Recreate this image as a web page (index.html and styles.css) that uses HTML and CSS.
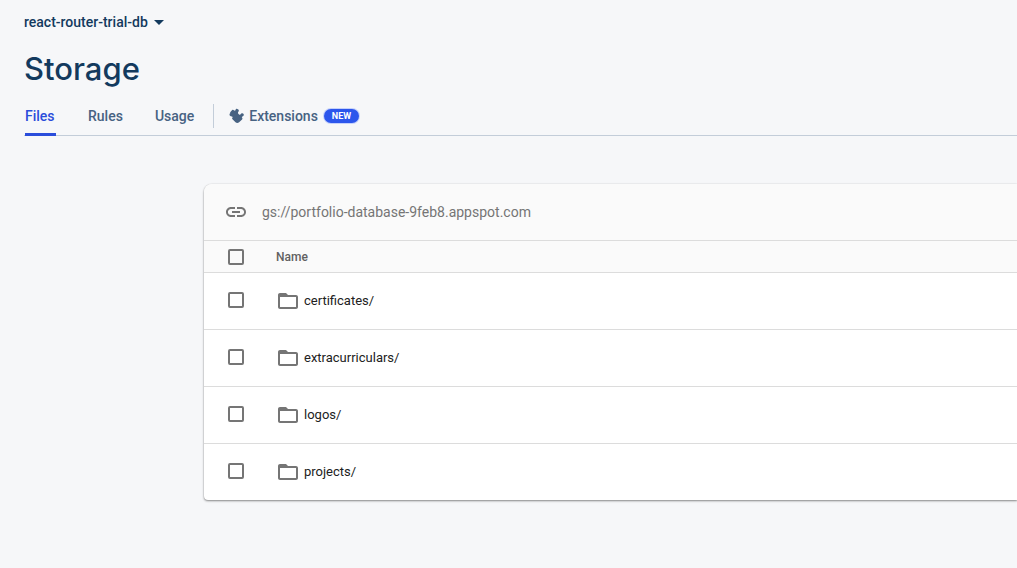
FILE: index.html
```html
<!DOCTYPE html>
<html lang="en">
<head>
<meta charset="utf-8">
<title>Storage</title>
<link rel="stylesheet" href="styles.css">
</head>
<body>
<header class="page-header">
  <button class="project-picker" type="button">react-router-trial-db
    <svg class="caret" viewBox="0 0 10 5" aria-hidden="true"><path d="M0 0h10L5 5z"/></svg>
  </button>
  <h1 class="title">Storage</h1>
  <nav class="tabs">
    <a class="tab tab-active" href="#files">Files</a>
    <a class="tab" href="#rules">Rules</a>
    <a class="tab" href="#usage">Usage</a>
    <a class="tab tab-extensions" href="#extensions">
      <svg class="puzzle" viewBox="0 0 16 16" aria-hidden="true"><path d="M1.2 4.2 3.2 2.1c.6-.5 1.2-.4 1.7.2.5.5 1.2.4 1.6-.1C6.600 1.300 7.300.7 8.200.9c1.200.1 1.900 1.200 1.600 2.200-.2.7-.9.9-.8 1.700.1.9.6 1.600 1.400 1.900.8.2 1.100-.5 1.700-1 .8-.8 2.200-.4 2.600.5.4 1-.1 1.900-1.200 2.200-.7.2-.8.9-.3 1.400.4.500.4 1.100-.1 1.600l-3 2.800c-1.200 1.100-2.500 1.100-3.600 0l-3-3c-.6-.6-.5-1.200 0-1.700.4-.5.1-1-.6-1.100C1.300 8.200.400 7.600.500 6.500c.1-.8.400-1.100.900-1.400-.3-.3-.4-.6-.2-.9z"/></svg>
      Extensions <span class="badge">NEW</span>
    </a>
  </nav>
</header>
<main class="content">
  <section class="card">
    <div class="bucket">
      <svg class="link-icon" viewBox="0 0 24 24" aria-hidden="true"><path d="M3.9 12c0-1.71 1.39-3.1 3.1-3.1h4V7H7c-2.76 0-5 2.24-5 5s2.24 5 5 5h4v-1.9H7c-1.71 0-3.1-1.39-3.1-3.1zM8 13h8v-2H8v2zm9-6h-4v1.9h4c1.71 0 3.1 1.39 3.1 3.1s-1.39 3.1-3.1 3.1h-4V17h4c2.76 0 5-2.24 5-5s-2.24-5-5-5z"/></svg>
      <span>gs://portfolio-database-9feb8.appspot.com</span>
    </div>
    <table class="files">
      <thead>
        <tr><th class="select"><input class="check" type="checkbox" aria-label="Select all"></th><th class="name" scope="col">Name</th></tr>
      </thead>
      <tbody>
        <tr><td class="select"><input class="check" type="checkbox" id="f1"></td><td class="name"><label class="file" for="f1"><svg class="folder" viewBox="0 0 24 24" aria-hidden="true"><path d="M20 6h-8l-2-2H4c-1.1 0-2 .9-2 2v12c0 1.1.9 2 2 2h16c1.1 0 2-.9 2-2V8c0-1.1-.9-2-2-2zm0 12H4V8h16v10z"/></svg><span class="file-name">certificates/</span></label></td></tr>
        <tr><td class="select"><input class="check" type="checkbox" id="f2"></td><td class="name"><label class="file" for="f2"><svg class="folder" viewBox="0 0 24 24" aria-hidden="true"><path d="M20 6h-8l-2-2H4c-1.1 0-2 .9-2 2v12c0 1.1.9 2 2 2h16c1.1 0 2-.9 2-2V8c0-1.1-.9-2-2-2zm0 12H4V8h16v10z"/></svg><span class="file-name">extracurriculars/</span></label></td></tr>
        <tr><td class="select"><input class="check" type="checkbox" id="f3"></td><td class="name"><label class="file" for="f3"><svg class="folder" viewBox="0 0 24 24" aria-hidden="true"><path d="M20 6h-8l-2-2H4c-1.1 0-2 .9-2 2v12c0 1.1.9 2 2 2h16c1.1 0 2-.9 2-2V8c0-1.1-.9-2-2-2zm0 12H4V8h16v10z"/></svg><span class="file-name">logos/</span></label></td></tr>
        <tr><td class="select"><input class="check" type="checkbox" id="f4"></td><td class="name"><label class="file" for="f4"><svg class="folder" viewBox="0 0 24 24" aria-hidden="true"><path d="M20 6h-8l-2-2H4c-1.1 0-2 .9-2 2v12c0 1.1.9 2 2 2h16c1.1 0 2-.9 2-2V8c0-1.1-.9-2-2-2zm0 12H4V8h16v10z"/></svg><span class="file-name">projects/</span></label></td></tr>
      </tbody>
    </table>
  </section>
</main>
</body>
</html>
```

FILE: styles.css
```css
* { box-sizing: border-box; }

body {
  margin: 0;
  background: #f6f7f9;
  color: #212121;
  font-family: Roboto, "Liberation Sans", sans-serif;
  font-size: 14px;
}

.page-header {
  display: flex;
  flex-direction: column;
  align-items: flex-start;
  padding-top: 12px;
  padding-left: 24px;
}

.project-picker {
  display: flex;
  align-items: center;
  gap: 6px;
  padding: 0;
  border: 0;
  background: none;
  color: #133a5e;
  font: 500 14px/20px Roboto, "Liberation Sans", sans-serif;
}

.caret { width: 10px; height: 5px; fill: currentColor; }

.title {
  margin: 17px 0 15px;
  color: #133a5e;
  font: 500 31px/40px Inter, "Liberation Sans", sans-serif;
}

.tabs {
  display: flex;
  align-self: stretch;
  gap: 32px;
  padding-left: 1px;
  border-bottom: 1px solid #c3cdd9;
}

.tab {
  display: flex;
  align-items: center;
  height: 24px;
  margin-bottom: 7px;
  color: #476282;
  font-weight: 500;
  text-decoration: none;
}

.tab-active {
  min-width: 31px;
  height: 32px;
  margin-bottom: -1px;
  padding-bottom: 5px;
  border-bottom: 3px solid #2a4ddb;
  border-radius: 2px 2px 0 0;
  color: #2a4ddb;
}

.tab-extensions {
  margin-left: -13px;
  padding-left: 15px;
  border-left: 1px solid #c3cdd9;
  gap: 4px;
}

.puzzle { width: 16px; height: 16px; fill: currentColor; }

.badge {
  margin-left: 2px;
  padding: 0 8px;
  border-radius: 8px;
  background: #2c56ec;
  box-shadow: 0 0 0 1px #c5d1fb;
  color: #fff;
  font-size: 9px;
  font-weight: 700;
  line-height: 14px;
}

.content { padding: 48px 0 68px 204px; }

.card {
  overflow: hidden;
  border-radius: 8px 0 0 4px;
  background: #fff;
  box-shadow: 0 0 1px rgba(0, 0, 0, 0.2), 0 1px 2px rgba(0, 0, 0, 0.35), 0 1px 3px rgba(0, 0, 0, 0.12);
}

.bucket {
  display: flex;
  align-items: center;
  gap: 14px;
  height: 57px;
  padding-left: 20px;
  border-bottom: 1px solid #dcdcdc;
  background: #fafafa;
  color: #757575;
}

.link-icon, .folder { width: 24px; height: 24px; fill: #757575; }

.files {
  width: 100%;
  border-spacing: 0;
  font-size: 13px;
}

th, td { padding: 0; text-align: left; }

th {
  height: 32px;
  border-bottom: 1px solid #dcdcdc;
  background: #fafafa;
  color: #616161;
  font-size: 12px;
  font-weight: 500;
}

td { height: 57px; border-bottom: 1px solid #dcdcdc; }

tr:last-child td { height: 56px; border-bottom: 0; }

.select { width: 72px; padding-left: 24px; }

td.select { padding-bottom: 2px; }

.check {
  display: block;
  width: 16px;
  height: 16px;
  margin: 0;
  border: 2px solid #757575;
  border-radius: 2px;
  appearance: none;
}

.file { display: flex; align-items: center; gap: 4px; }

.file-name { padding-bottom: 2px; }
```
